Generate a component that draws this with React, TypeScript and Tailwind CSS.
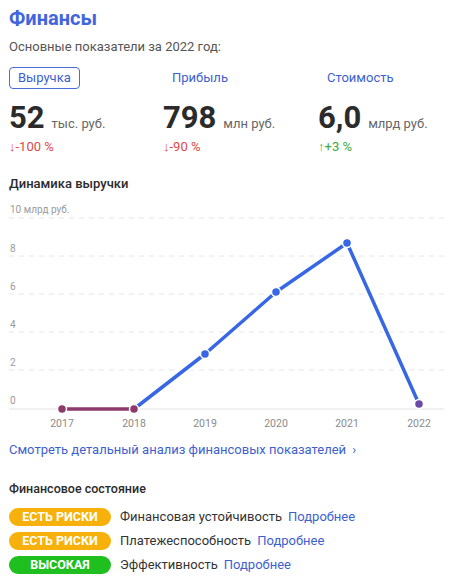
const metrics = [
  { value: "52", unit: "тыс. руб.", delta: "↓-100 %", up: false },
  { value: "798", unit: "млн руб.", delta: "↓-90 %", up: false },
  { value: "6,0", unit: "млрд руб.", delta: "↑+3 %", up: true },
];

const states = [
  { badge: "ЕСТЬ РИСКИ", color: "bg-[#f7b10a]", label: "Финансовая устойчивость" },
  { badge: "ЕСТЬ РИСКИ", color: "bg-[#f7b10a]", label: "Платежеспособность" },
  { badge: "ВЫСОКАЯ", color: "bg-[#1fbf1f]", label: "Эффективность" },
];

// chart coordinates are relative to the svg (left = 9px on the page)
const gridY = [17, 55, 93, 131, 169];
const yLabels = ["8", "6", "4", "2", "0"];
const years = [
  { year: "2017", x: 53 },
  { year: "2018", x: 125 },
  { year: "2019", x: 196 },
  { year: "2020", x: 267 },
  { year: "2021", x: 338 },
  { year: "2022", x: 410 },
];
const points = [
  [53, 208],
  [125, 208],
  [196, 153],
  [267, 91],
  [338, 42],
  [410, 203],
];

function Chart() {
  const blue = points.slice(1).map((p) => p.join(",")).join(" ");
  return (
    <svg width="435" height="232" viewBox="0 0 435 232" className="block">
      <text x="1" y="12" fontSize="10" fill="#9a9a9a" fontFamily="Roboto, sans-serif">
        10 млрд руб.
      </text>
      {gridY.map((y, i) => (
        <g key={y}>
          <line x1="0" x2="435" y1={y} y2={y} stroke="#e6e6e6" strokeDasharray="5 5" />
          <text x="1" y={y + 38 - 4} fontSize="10" fill="#9a9a9a" fontFamily="Roboto, sans-serif">
            {yLabels[i]}
          </text>
        </g>
      ))}
      <line x1="0" x2="435" y1="208" y2="208" stroke="#e2e2e2" />
      <polyline points={blue} fill="none" stroke="#ffffff" strokeWidth="7" strokeLinejoin="round" opacity="0.9" />
      <polyline points={blue} fill="none" stroke="#3767e4" strokeWidth="3.5" strokeLinejoin="round" />
      <line x1="53" y1="208" x2="125" y2="208" stroke="#8c3a6c" strokeWidth="3.5" />
      {points.map(([x, y], i) => (
        <circle
          key={i}
          cx={x}
          cy={y}
          r="4.5"
          fill={i < 2 ? "#8c3a6c" : i === 5 ? "#6b4aa6" : "#3767e4"}
          stroke="#ffffff"
          strokeWidth="1.5"
        />
      ))}
      {years.map((y) => (
        <text
          key={y.year}
          x={y.x}
          y="226"
          textAnchor="middle"
          fontSize="10.5"
          fill="#8a8a8a"
          fontFamily="Roboto, sans-serif"
        >
          {y.year}
        </text>
      ))}
    </svg>
  );
}

export default function App() {
  return (
    <div className="w-[453px] h-[580px] bg-white px-[9px] overflow-hidden text-[#333] font-['Roboto',sans-serif]">
      <h1 className="pt-[6px] text-[20px] leading-[24px] font-bold text-[#4165de]">Финансы</h1>
      <p className="mt-[9px] text-[13px] leading-[16px] text-[#555]">Основные показатели за 2022 год:</p>

      {/* tabs */}
      <div className="mt-[12px] grid grid-cols-[154px_155px_1fr] text-[13px] leading-[16px] text-[#3d5fd0]">
        <div>
          <span className="inline-block border border-[#4a6bd8] rounded-[4px] px-[8px] py-[2px]">Выручка</span>
        </div>
        <div className="pl-[9px] py-[3px]">Прибыль</div>
        <div className="pl-[9px] py-[3px]">Стоимость</div>
      </div>

      <div className="mt-[12px] grid grid-cols-[154px_155px_1fr]">
        {metrics.map((m) => (
          <div key={m.value}>
            <div className="flex items-baseline gap-[7px]">
              <span className="text-[31px] leading-[34px] font-bold text-[#2b2b2b]">{m.value}</span>
              <span className="text-[13px] text-[#666]">{m.unit}</span>
            </div>
            <div className={`mt-[4px] text-[13px] leading-[16px] ${m.up ? "text-[#3daa3d]" : "text-[#e04848]"}`}>
              {m.delta}
            </div>
          </div>
        ))}
      </div>

      <h2 className="mt-[21px] text-[13px] leading-[16px] font-medium text-[#2b2b2b]">Динамика выручки</h2>

      <div className="mt-[9px]">
        <Chart />
      </div>

      <a className="block mt-[9px] text-[13px] leading-[16px] text-[#3d5fd0]">
        Смотреть детальный анализ финансовых показателей <span className="ml-[3px]">›</span>
      </a>

      <h2 className="mt-[23px] text-[12.5px] leading-[16px] font-medium text-[#2b2b2b]">Финансовое состояние</h2>

      <div className="mt-[11px] flex flex-col gap-[6px]">
        {states.map((s) => (
          <div key={s.label} className="flex items-center text-[13px] leading-[18px]">
            <span
              className={`w-[102px] h-[18px] rounded-full ${s.color} text-white text-[12.5px] font-bold flex items-center justify-center`}
            >
              {s.badge}
            </span>
            <span className="ml-[9px] text-[#333]">{s.label}</span>
            <span className="ml-[6px] text-[#3d5fd0]">Подробнее</span>
          </div>
        ))}
      </div>
    </div>
  );
}
